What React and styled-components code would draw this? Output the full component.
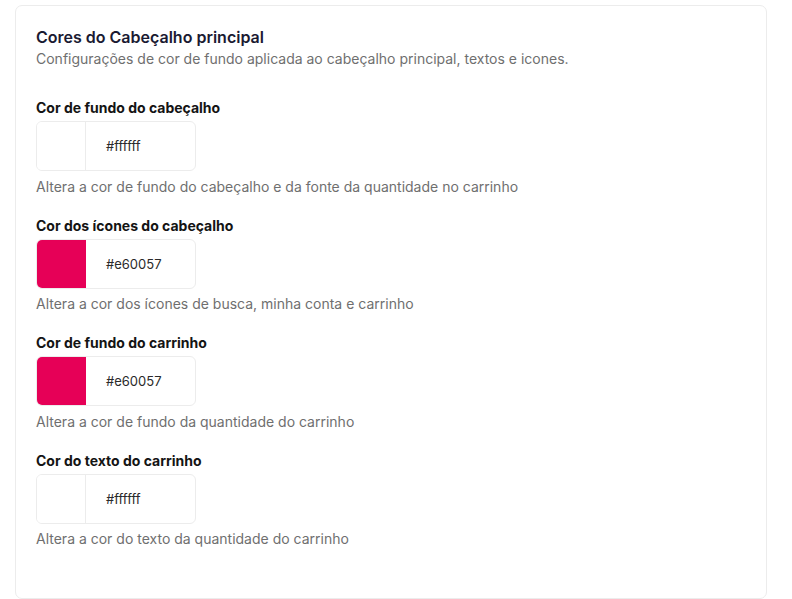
import React from 'react';
import styled, { createGlobalStyle } from 'styled-components';

const GlobalStyle = createGlobalStyle`
  html, body {
    margin: 0;
    padding: 0;
    background: #ffffff;
  }
  body {
    font-family: Inter, "Noto Sans", sans-serif;
    -webkit-font-smoothing: antialiased;
  }
`;

const Page = styled.div`
  padding: 5px 25px 0 15px;
  height: 599px;
  box-sizing: border-box;
  overflow: hidden;
`;

const Card = styled.section`
  border: 1px solid #ececec;
  border-radius: 7px;
  padding: 19px 20px 48px;
  min-height: 594px;
  box-sizing: border-box;
`;

const Title = styled.h2`
  margin: 0;
  font-size: 16px;
  line-height: 24px;
  font-weight: 600;
  color: #1a1a32;
`;

const Subtitle = styled.p`
  margin: 0;
  font-size: 14px;
  line-height: 20px;
  color: #6f6f6f;
`;

const Fields = styled.div`
  display: flex;
  flex-direction: column;
  gap: 19px;
  margin-top: 29px;
`;

const Field = styled.div`
  display: flex;
  flex-direction: column;
`;

const Label = styled.label`
  font-size: 14px;
  line-height: 20px;
  font-weight: 700;
  color: #141414;
`;

const ColorInput = styled.div`
  display: flex;
  width: 160px;
  height: 50px;
  margin-top: 3px;
  border: 1px solid #ececec;
  border-radius: 6px;
  box-sizing: border-box;
  overflow: hidden;
`;

const Swatch = styled.span`
  width: 48px;
  flex-shrink: 0;
  background: ${(p) => p.$color};
  border-right: 1px solid ${(p) => (p.$color === '#ffffff' ? '#ececec' : p.$color)};
`;

const HexValue = styled.span`
  display: flex;
  align-items: center;
  padding-left: 20px;
  font-size: 13px;
  color: #2a2a2a;
`;

const Help = styled.p`
  margin: 5.5px 0 0;
  font-size: 14px;
  line-height: 20px;
  color: #6f6f6f;
`;

const fields = [
  {
    label: 'Cor de fundo do cabeçalho',
    color: '#ffffff',
    help: 'Altera a cor de fundo do cabeçalho e da fonte da quantidade no carrinho',
  },
  {
    label: 'Cor dos ícones do cabeçalho',
    color: '#e60057',
    help: 'Altera a cor dos ícones de busca, minha conta e carrinho',
  },
  {
    label: 'Cor de fundo do carrinho',
    color: '#e60057',
    help: 'Altera a cor de fundo da quantidade do carrinho',
  },
  {
    label: 'Cor do texto do carrinho',
    color: '#ffffff',
    help: 'Altera a cor do texto da quantidade do carrinho',
  },
];

function App() {
  return (
    <>
      <GlobalStyle />
      <Page>
        <Card>
          <Title>Cores do Cabeçalho principal</Title>
          <Subtitle>
            Configurações de cor de fundo aplicada ao cabeçalho principal, textos e icones.
          </Subtitle>
          <Fields>
            {fields.map((f) => (
              <Field key={f.label}>
                <Label>{f.label}</Label>
                <ColorInput>
                  <Swatch $color={f.color} />
                  <HexValue>{f.color}</HexValue>
                </ColorInput>
                <Help>{f.help}</Help>
              </Field>
            ))}
          </Fields>
        </Card>
      </Page>
    </>
  );
}

export default App;
